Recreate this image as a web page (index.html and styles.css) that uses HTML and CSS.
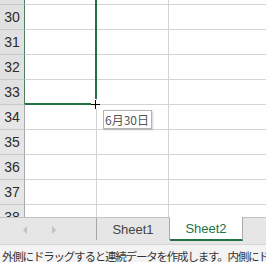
FILE: index.html
```html
<!DOCTYPE html>
<html lang="ja">
<head>
<meta charset="utf-8">
<link rel="stylesheet" href="styles.css">
</head>
<body>
<div class="app">
  <div class="grid">
    <div class="row short"><div class="rh sel"></div><div class="c"></div><div class="c"></div><div class="c last"></div></div>
    <div class="row"><div class="rh sel">30</div><div class="c"></div><div class="c"></div><div class="c last"></div></div>
    <div class="row"><div class="rh sel">31</div><div class="c"></div><div class="c"></div><div class="c last"></div></div>
    <div class="row"><div class="rh sel">32</div><div class="c"></div><div class="c"></div><div class="c last"></div></div>
    <div class="row"><div class="rh sel">33</div><div class="c"></div><div class="c"></div><div class="c last"></div></div>
    <div class="row"><div class="rh">34</div><div class="c"></div><div class="c"></div><div class="c last"></div></div>
    <div class="row"><div class="rh">35</div><div class="c"></div><div class="c"></div><div class="c last"></div></div>
    <div class="row"><div class="rh">36</div><div class="c"></div><div class="c"></div><div class="c last"></div></div>
    <div class="row"><div class="rh">37</div><div class="c"></div><div class="c"></div><div class="c last"></div></div>
    <div class="row"><div class="rh">38</div><div class="c"></div><div class="c"></div><div class="c last"></div></div>
    <div class="sel-right"></div>
    <div class="sel-bottom"></div>
    <svg class="cursor" width="11" height="11" viewBox="0 0 11 11">
      <path d="M5.5 1V10M1 5.5H10" stroke="#fff" stroke-width="3"/>
      <path d="M5.5 1V10M1 5.5H10" stroke="#000" stroke-width="1"/>
    </svg>
    <div class="tip">6月30日</div>
  </div>
  <div class="tabbar">
    <div class="nav">
      <span class="arr left"></span>
      <span class="arr right"></span>
    </div>
    <div class="tab">Sheet1</div>
    <div class="tab active">Sheet2</div>
    <div class="fill"></div>
  </div>
  <div class="status">外側にドラッグすると連続データを作成します。内側にドラッグするとデータを消去します。</div>
</div>
</body>
</html>
```

FILE: styles.css
```css
html, body {
  margin: 0;
  padding: 0;
  background: #ffffff;
}
.app {
  width: 266px;
  height: 262px;
  display: flex;
  flex-direction: column;
  overflow: hidden;
}
.grid {
  position: relative;
  height: 217px;
  overflow: hidden;
  flex: none;
}
.row {
  display: flex;
  height: 25px;
}
.row.short {
  height: 5px;
}
.rh {
  width: 24px;
  flex: none;
  background: #e6e6e6;
  border-right: 1px solid #a9a9a9;
  border-bottom: 1px solid #c9c9c9;
  font-family: "Liberation Sans", Arial, sans-serif;
  font-size: 14px;
  color: #2b2b2b;
  display: flex;
  align-items: center;
  justify-content: center;
}
.rh.sel {
  border-right-color: #4f7d61;
  background: #e1e1e1;
}
.c {
  width: 71px;
  flex: none;
  border-right: 1px solid #d4d4d4;
  border-bottom: 1px solid #d4d4d4;
}
.c.last {
  flex: 1;
  border-right: none;
}
.sel-right {
  position: absolute;
  left: 95px;
  top: 0;
  width: 2px;
  height: 99px;
  background: #217346;
}
.sel-bottom {
  position: absolute;
  left: 25px;
  top: 103px;
  width: 66px;
  height: 2px;
  background: #217346;
}
.cursor {
  position: absolute;
  left: 90px;
  top: 99px;
}
.tip {
  position: absolute;
  left: 103px;
  top: 110px;
  height: 17px;
  padding: 0 2px 0 1px;
  background: #ffffff;
  border: 1px solid #b4b4b4;
  box-shadow: 1px 1px 2px rgba(0, 0, 0, 0.18);
  font-family: "Noto Sans CJK JP", sans-serif;
  font-size: 12px;
  line-height: 17px;
  color: #555555;
}
.tabbar {
  height: 26px;
  flex: none;
  background: #e6e6e6;
  border-top: 1px solid #c3c3c3;
  border-bottom: 1px solid #d6d6d6;
  display: flex;
  align-items: flex-start;
}
.nav {
  width: 96px;
  height: 23px;
  flex: none;
  position: relative;
}
.arr {
  position: absolute;
  top: 8px;
  width: 0;
  height: 0;
  border-top: 4px solid transparent;
  border-bottom: 4px solid transparent;
}
.arr.left {
  left: 23px;
  border-right: 4px solid #c2c2c2;
}
.arr.right {
  left: 52px;
  border-left: 4px solid #c2c2c2;
}
.tab {
  width: 72px;
  height: 22px;
  flex: none;
  border-left: 1px solid #a8a8a8;
  border-right: 1px solid #a8a8a8;
  font-family: "Liberation Sans", Arial, sans-serif;
  font-size: 13px;
  color: #444444;
  display: flex;
  align-items: center;
  justify-content: center;
}
.tab.active {
  margin-top: -1px;
  border-left: none;
  background: #ffffff;
  border-bottom: 2px solid #217346;
  color: #217346;
}
.fill {
  flex: 1;
}
.status {
  flex: 1;
  background: #f3f3f3;
  padding: 3px 0 0 2px;
  font-family: "Noto Sans CJK JP", sans-serif;
  font-size: 11.5px;
  letter-spacing: -1.2px;
  line-height: 17px;
  color: #333333;
  white-space: nowrap;
  overflow: hidden;
}
```
